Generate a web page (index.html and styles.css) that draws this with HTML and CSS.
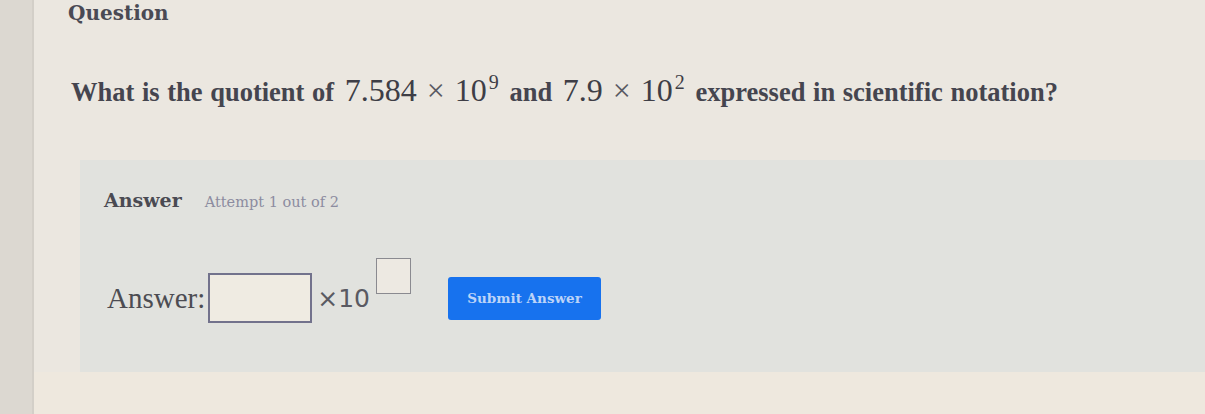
FILE: index.html
```html
<!DOCTYPE html>
<html lang="en">
<head>
    <meta charset="UTF-8">
    <meta name="viewport" content="width=device-width, initial-scale=1.0">
    <title>Question</title>
    <link rel="stylesheet" href="styles.css">
</head>
<body>
    <div class="page">
        <div class="rail"></div>
        <div class="main">
            <div class="question-block">
                <h3 class="question-title">Question</h3>
                <p class="question-text">
                    What is the quotient of
                    <span class="math">7.584<span class="op">×</span>10<sup>9</sup></span>
                    and
                    <span class="math">7.9<span class="op">×</span>10<sup>2</sup></span>
                    expressed in scientific notation?
                </p>
            </div>

            <div class="answer-panel">
                <div class="answer-head">
                    <span class="answer-title">Answer</span>
                    <span class="attempt">Attempt 1 out of 2</span>
                </div>
                <div class="answer-row">
                    <span class="answer-label">Answer:</span>
                    <input type="text" class="coef-input">
                    <span class="times-ten">×10</span>
                    <input type="text" class="exp-input">
                    <button class="submit-btn">Submit Answer</button>
                </div>
            </div>
            <div class="foot"></div>
        </div>
    </div>
</body>
</html>
```

FILE: styles.css
```css
body {
    margin: 0;
    background: #ebe7e0;
    color: #3d3d44;
    font-family: "Liberation Serif", serif;
}
.page {
    display: flex;
    height: 414px;
    overflow: hidden;
}
.rail {
    width: 32px;
    flex: none;
    background: #dcd8d1;
    border-right: 2px solid #d3cfc8;
}
.main {
    flex: 1;
    display: flex;
    flex-direction: column;
}
.question-block {
    padding: 0 0 0 34px;
    height: 160px;
}
.question-title {
    font-family: "DejaVu Serif", serif;
    font-weight: bold;
    font-size: 20px;
    color: #4a4a54;
    margin: 1px 0 0 0;
}
.question-text {
    font-weight: bold;
    font-size: 26.5px;
    word-spacing: 1px;
    color: #45454f;
    margin: 47px 0 0 3px;
}
.math {
    font-weight: normal;
    font-size: 32px;
    word-spacing: 0;
    color: #3e3e46;
    margin: 0 3px;
}
.math .op {
    color: #5a5a62;
    margin: 0 10px;
}
.math sup {
    font-size: 20px;
    line-height: 0;
    margin-left: 2px;
}
.answer-panel {
    margin-left: 46px;
    height: 212px;
    background: #e1e2de;
}
.answer-head {
    display: flex;
    align-items: baseline;
    gap: 23px;
    padding: 29px 0 0 24px;
}
.answer-title {
    font-family: "DejaVu Serif", serif;
    font-weight: bold;
    font-size: 19px;
    color: #4a4a52;
}
.attempt {
    font-family: "DejaVu Serif", serif;
    font-size: 14.5px;
    color: #8c8ca0;
}
.answer-row {
    display: flex;
    align-items: center;
    padding: 62px 0 0 27px;
}
.answer-label {
    font-size: 29px;
    color: #4c4c52;
}
.coef-input {
    width: 104px;
    height: 50px;
    box-sizing: border-box;
    margin-left: 3px;
    border: 2px solid #72728c;
    background: #efebe2;
}
.times-ten {
    font-family: "DejaVu Sans", sans-serif;
    font-size: 25px;
    color: #5a5a62;
    margin-left: 5px;
}
.exp-input {
    width: 35px;
    height: 36px;
    box-sizing: border-box;
    border: 1.5px solid #8a8a90;
    background: #ede9e2;
    align-self: flex-start;
    margin: -15px 0 0 6px;
}
.submit-btn {
    margin-left: 37px;
    width: 153px;
    height: 43px;
    background: #1772ee;
    color: #bcd4f8;
    border: none;
    border-radius: 3px;
    font-family: "DejaVu Serif", serif;
    font-weight: bold;
    font-size: 13.5px;
}
.foot {
    flex: 1;
    background: #eee8de;
}
```
